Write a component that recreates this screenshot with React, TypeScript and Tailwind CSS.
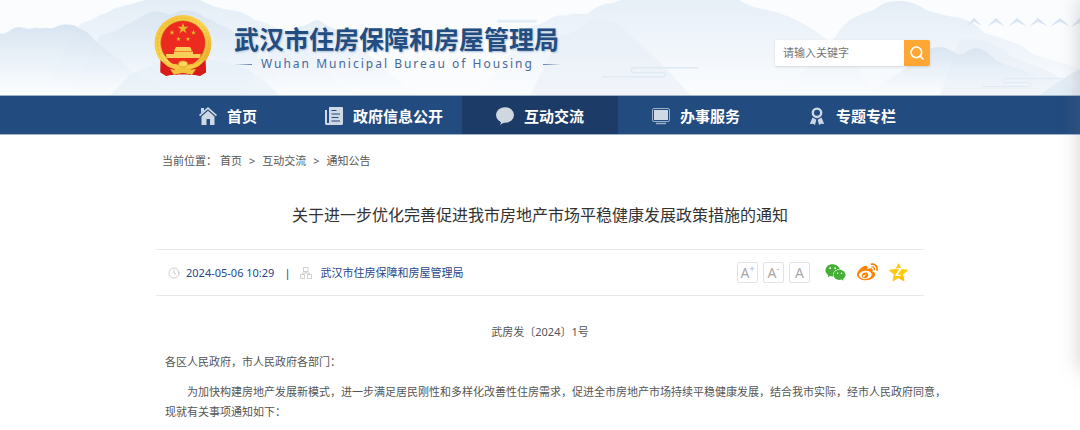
import React, { useState } from 'react';
import { FaWeixin, FaWeibo } from 'react-icons/fa';
import { Clock, Search } from 'lucide-react';

// --- ICONS ---

const HomeIcon = () => (
  <svg viewBox="0 0 18 18" className="size-[18px] fill-[#cfd8e5]" aria-hidden="true">
    <path d="M2 1h3v2.6L2 6.4z" />
    <path d="M9 0l9 8-1 1.2L9 2.2 1 9.200 0 8z" />
    <path d="M9 3.800l6.500 5.700V18H11v-6H7.500v6H2.500V9.500z" />
  </svg>
);

const NewsIcon = () => (
  <svg viewBox="0 0 18 18" className="size-[18px]" aria-hidden="true">
    <path d="M0 3h2v13h2V0h13a1 1 0 011 1v15.500A1.500 1.500 0 0116.500 18h-15A1.500 1.500 0 010 16.500z" fill="#cfd8e5" />
    <path d="M6.500 3.500h5M6.500 7h8.500M6.500 10.500h7M6.500 14h8.500" stroke="#224b7f" strokeWidth="1.2" />
    <path d="M3 3v13" stroke="#224b7f" strokeWidth="1" />
  </svg>
);

const ChatIcon = () => (
  <svg viewBox="0 0 18 18" className="size-[18px] fill-[#cfd8e0]" aria-hidden="true">
    <ellipse cx="9" cy="8" rx="9" ry="7.800" />
    <path d="M4 13.500l1 2.500-1.200 2 5.200-3z" />
  </svg>
);

const ServiceIcon = () => (
  <svg viewBox="0 0 18 18" className="size-[18px]" aria-hidden="true">
    <rect x="0.500" y="1.500" width="17" height="13" rx="1.500" fill="none" stroke="#9fb1ca" />
    <rect x="2" y="3" width="14" height="10" fill="#cfd8e5" />
    <path d="M4 16.500h10" stroke="#9fb1ca" strokeWidth="1.500" />
  </svg>
);

const MedalIcon = () => (
  <svg viewBox="0 0 18 18" className="size-[18px]" aria-hidden="true">
    <circle cx="9" cy="5.800" r="4.200" fill="none" stroke="#cfd8e5" strokeWidth="2.400" />
    <path d="M4.500 10.500l3.800 2.300L7 18l-2.200-1.300-3 .3z" fill="#cfd8e5" />
    <path d="M13.500 10.500l-3.800 2.300L11 18l2.200-1.300 3 .3z" fill="#cfd8e5" />
  </svg>
);

const OrgIcon = () => (
  <svg viewBox="0 0 12 12" className="size-3" fill="none" stroke="#d0d0d0" aria-hidden="true">
    <rect x="3.500" y="0.500" width="4.500" height="4" />
    <rect x="0.500" y="7.500" width="4" height="4" />
    <rect x="7.500" y="7.500" width="4" height="4" />
    <path d="M6 4.500V6M2.500 7.500V6h7v1.500" />
  </svg>
);

const QzoneIcon = () => (
  <svg viewBox="0 0 20 20" className="size-[19px]" aria-hidden="true">
    <path
      d="M10 .8l2.700 6 6.700.8-5 4.500 1.400 6.700-5.800-3.300-5.800 3.300 1.400-6.700-5-4.500 6.700-.8z"
      fill="#ffc80a"
      stroke="#ffc80a"
      strokeLinejoin="round"
    />
    <path d="M5.500 14.500c3 1 7 .8 9.500-.5l1 4.500-6-3.200z" fill="#ffb400" opacity=".5" />
    <text x="10" y="14" textAnchor="middle" fontSize="11" fontWeight="bold" fontStyle="italic" fontFamily="Noto Sans, sans-serif" fill="#fff">
      Z
    </text>
  </svg>
);

const STAR = 'M0-1L.225-.309H.951L.363.118.588.809 0 .382-.588.809-.363.118-.951-.309H-.225z';

const Emblem = () => (
  <svg viewBox="0 0 58 61" className="h-[61px] w-[58px] shrink-0" role="img" aria-label="国徽">
    <defs>
      <linearGradient id="gold" x1="0" y1="0" x2="1" y2="1">
        <stop offset="0" stopColor="#f2bf35" />
        <stop offset=".5" stopColor="#fbd552" />
        <stop offset="1" stopColor="#e3a421" />
      </linearGradient>
    </defs>
    <path d="M7 43l44 0 1 14-6 3.500-6-1H18l-6 1L6.500 57z" fill="#dd1f1c" />
    <ellipse cx="29" cy="28.500" rx="28.500" ry="28.500" fill="url(#gold)" />
    <circle cx="29" cy="28.500" r="25.500" fill="none" stroke="#e0a126" strokeDasharray="2 2" opacity=".6" />
    <circle cx="29" cy="28" r="22.300" fill="#ec2a20" stroke="#c8902a" strokeWidth=".6" />
    <g fill="#e9b32f">
      <path d={STAR} transform="translate(29 13.500) scale(5.800)" />
      <path d={STAR} transform="translate(18 17.500) scale(2.800)" />
      <path d={STAR} transform="translate(39.500 17.500) scale(2.800)" />
      <path d={STAR} transform="translate(24.500 24) scale(2.600)" />
      <path d={STAR} transform="translate(34 24) scale(2.600)" />
    </g>
    <path d="M22 32h14l1.500 2.500v1.500h-17v-1.500zM20 36.500h19v2.500h-19zM12 39h35l-1.500 4H12.500z" fill="#f8cf56" />
    <path d="M13 43h32c-3 4-6 6-8 6l-5-3h-6l-5 3c-3 0-6-2-8-6z" fill="#ec2a20" />
    <path d="M8 43c5 5 9 7 15 8l6-4 6 4c6-1 10-3 15-8l-2 5c-5 5-12 6-19 6s-14-1-19-6z" fill="#f7c944" />
    <path d="M6.500 45c6 6 9 8 14 9l3 6H17l-5 1-5.500-3.500zM51.500 45c-6 6-9 8-14 9l-3 6H41l5 1 6-3.500z" fill="#d91c1a" />
    <path d="M16 54c5 1 7 1 10-1h6c3 2 5 2 10 1l-4 6c-3-1-6-2-9-2s-6 1-9 2z" fill="#f3c23c" />
    <ellipse cx="29" cy="49" rx="4.500" ry="3" fill="#fbd75b" stroke="#d99a20" strokeWidth=".8" />
  </svg>
);

// Ink-wash mountains behind the header
const Landscape = () => (
  <svg viewBox="0 0 1080 96" preserveAspectRatio="none" className="absolute inset-0 size-full" aria-hidden="true">
    <defs>
      <linearGradient id="mist" x1="0" y1="0" x2="0" y2="1">
        <stop offset="0" stopColor="#d3e1ee" />
        <stop offset=".6" stopColor="#e6eff8" stopOpacity=".7" />
        <stop offset="1" stopColor="#f4f8fc" stopOpacity="0" />
      </linearGradient>
      <linearGradient id="mistLight" x1="0" y1="0" x2="0" y2="1">
        <stop offset="0" stopColor="#e4edf6" />
        <stop offset=".6" stopColor="#edf3fa" stopOpacity=".7" />
        <stop offset="1" stopColor="#f5f8fd" stopOpacity="0" />
      </linearGradient>
    </defs>
    <rect width="1080" height="96" fill="#fafcfe" />
    <path d="M80 24q14-4 20-9 8-2 13-6 12-4 22-6l10-3h55q14 8 30 10 14 1 24 10 30 6 60 40l40 36H40z" fill="url(#mistLight)" />
    <path d="M100 36q16-4 24-10 8-3 14-7 6-3 9-5 9-4 16-1 8 3 14-1 7-2 14-1 8 1 14 7 8 2 14 7 9 2 16 8 20 24 60 63H70z" fill="url(#mist)" opacity=".7" />
    <path d="M0 34q7 0 11-4 6-4 12-2 6 2 12 0 6 1 11 0 6 2 12-2 7-2 12-1 6 0 9 4 7 2 11 6 8 10 30 26 20 20 60 35H0z" fill="url(#mist)" opacity=".9" />
    <path d="M130 76q20-12 50-16 40-2 62 8 20 8 36 28H110z" fill="#e5eef6" opacity=".6" />
    <path d="M286 34q10-3 15-7 7-2 11-5 6-4 11 1 5 4 12 6 30 22 80 67H240z" fill="url(#mistLight)" />
    <path d="M530 27q14-3 20-8 8-5 15-3 7-3 14-2 7 1 12-3 8-7 22-8 8-4 16-3h110q12 8 28 10 20 4 40 16 40 24 70 70H480z" fill="url(#mistLight)" opacity=".9" />
    <path d="M560 36q14-2 20-8 8-6 14-8 9-1 16 2 12 3 20 14 26 20 60 60H530z" fill="#e3ebf6" opacity=".4" />
    <path d="M830 46q8-16 20-26 12-7 24-10 10-10 26-9 14 0 26 9 18 6 34 8 16 5 24 15 14 4 24 8 14 4 22 12 20 8 50 16v27H780z" fill="url(#mistLight)" />
    <path d="M960 40q18-2 30 4 12 4 20 12 14 8 30 12 20 8 40 28H940z" fill="#e3ecf6" opacity=".4" />
    <path d="M860 96q30-14 50-30 8-8 16-14 9-6 18-4 8 3 14 7 6 1 10-4 8-4 14-1 8 4 14 11 12 6 22 8 16 8 32 12l20 15z" fill="url(#mist)" opacity=".8" />
    <path d="M1056 84q8-3 12-8 6-3 12-6v26h-40z" fill="#dbe7f2" opacity=".6" />
    <path
      d="M966 27l8-9 8 8-8-4zM987 27l9-9 9 9-9-5zM1008 27l9-9 10 9-10-5zM1029 27l9-9 10 9-10-5zM1050 27l10-9 10 9-10-5zM1071 27l9-9v5z"
      fill="#d8e5f3"
    />
    <g fill="none" stroke="#dfeaf3" strokeWidth="1.500">
      <path d="M602 77.500h62q3-3 0-4h-30q-4-1-2-5h66" />
      <path d="M982 87.500h48q2-2 0-4h-26q-3-2 0-4h64" strokeWidth="1" />
    </g>
    <rect x="497" y="20" width="40" height="3" rx="1" fill="#e4eff7" />
  </svg>
);

// --- DATA ---

const NAV_ITEMS = [
  { label: '首页', icon: HomeIcon },
  { label: '政府信息公开', icon: NewsIcon },
  { label: '互动交流', icon: ChatIcon },
  { label: '办事服务', icon: ServiceIcon },
  { label: '专题专栏', icon: MedalIcon },
];

const FONT_BUTTONS = [
  { mark: '+', label: '放大字体' },
  { mark: '-', label: '缩小字体' },
  { mark: '', label: '默认字体' },
];

// --- SECTIONS ---

const Header: React.FC = () => {
  const [keyword, setKeyword] = useState('');

  return (
    <header className="relative">
      <Landscape />
      <div className="relative mx-auto flex h-[95px] max-w-[780px] items-start justify-between">
        <a href="#" className="flex gap-[22px] pt-[15px] pl-1">
          <Emblem />
          <div className="pt-2 text-[#234d80]">
            <h1 className="text-[25px] leading-8 font-bold whitespace-nowrap [text-shadow:1px_1px_2px_#a9bdd2]">
              武汉市住房保障和房屋管理局
            </h1>
            <div className="flex items-center gap-[9px] text-xs leading-[18px] whitespace-nowrap">
              <span className="h-px w-[18px] bg-linear-to-r from-transparent to-[#5f80a6]" />
              <span className="tracking-[2px] text-[#46699a]">Wuhan Municipal Bureau of Housing</span>
              <span className="h-px w-[18px] bg-linear-to-l from-transparent to-[#5f80a6]" />
            </div>
          </div>
        </a>

        <form onSubmit={(e) => e.preventDefault()} className="mt-10 flex h-[26px] shadow-sm">
          <input
            type="text"
            aria-label="搜索"
            value={keyword}
            onChange={(e) => setKeyword(e.target.value)}
            placeholder="请输入关键字"
            className="w-[129px] rounded-l-xs bg-white px-2 text-[11px] text-[#555] outline-none placeholder:text-[#757575]"
          />
          <button type="submit" aria-label="搜索" className="flex w-[26px] items-center justify-center rounded-r-xs bg-[#ffa733] text-white">
            <Search size={16} strokeWidth={2.5} />
          </button>
        </form>
      </div>
    </header>
  );
};

const Nav: React.FC = () => (
  <nav className="border-y border-[#9fb3cb] bg-[#224b7f]">
    <ul className="mx-auto grid max-w-[780px] grid-cols-5">
      {NAV_ITEMS.map(({ label, icon: Icon }) => (
        <li key={label}>
          <a
            href="#"
            className={`flex h-[38px] items-center justify-center gap-[10px] pt-px text-[15px] font-bold whitespace-nowrap text-white ${
              label === '互动交流' ? 'bg-[#1c3b66]' : ''
            }`}
          >
            <Icon />
            {label}
          </a>
        </li>
      ))}
    </ul>
  </nav>
);

const ArticleMeta: React.FC = () => (
  <div className="flex h-[47px] items-center justify-between border-y border-[#e8e8e8] pr-4 pl-3 text-[#27458a]">
    <div className="flex items-center">
      <Clock size={12} className="text-[#cccccc]" />
      <time className="pl-[6px]">2024-05-06 10:29</time>
      <span className="px-[10px]">|</span>
      <OrgIcon />
      <span className="pl-2">武汉市住房保障和房屋管理局</span>
    </div>
    <div className="flex items-center gap-[5px]">
      {FONT_BUTTONS.map(({ mark, label }) => (
        <button
          key={label}
          aria-label={label}
          className="flex size-[21px] items-center justify-center rounded-xs border border-[#e3e3e3] text-sm leading-none text-[#a8a8a8]"
        >
          A{mark && <span className="self-start pt-px text-[9px]">{mark}</span>}
        </button>
      ))}
      <div className="flex items-center gap-[11px] pl-[10px]">
        <a href="#" aria-label="微信"><FaWeixin size={21} color="#43b035" /></a>
        <a href="#" aria-label="微博"><FaWeibo size={21} color="#ff8208" /></a>
        <a href="#" aria-label="QQ空间"><QzoneIcon /></a>
      </div>
    </div>
  </div>
);

export default function App() {
  return (
    <div className="relative min-h-screen overflow-hidden bg-white font-['Noto_Sans','Noto_Sans_CJK_SC',sans-serif] text-[11px] leading-5 text-[#555]">
      <Header />
      <Nav />

      <main className="mx-auto max-w-[768px]">
        <div className="flex gap-[7px] px-[6px] pt-4">
          <span className="-mr-1">当前位置：</span>
          <a href="#">首页</a>
          <span>&gt;</span>
          <a href="#">互动交流</a>
          <span>&gt;</span>
          <a href="#">通知公告</a>
        </div>

        <h2 className="pt-8 pb-[22px] text-center text-base leading-6 text-[#333]">
          关于进一步优化完善促进我市房地产市场平稳健康发展政策措施的通知
        </h2>

        <ArticleMeta />

        <article className="-mr-6 space-y-[10px] pt-[26px] pb-2 pl-[9px]">
          <p className="pr-[33px] text-center">武房发〔2024〕1号</p>
          <p>各区人民政府，市人民政府各部门：</p>
          <p className="indent-[22px]">
            为加快构建房地产发展新模式，进一步满足居民刚性和多样化改善性住房需求，促进全市房地产市场持续平稳健康发展，结合我市实际，经市人民政府同意，现就有关事项通知如下：
          </p>
        </article>
      </main>

      {/* Shadow of the side panel docked past the right edge */}
      <div className="pointer-events-none absolute top-0 -right-5 h-[370px] w-5 shadow-[0_0_20px_rgba(120,120,120,0.35)]" />
    </div>
  );
}
